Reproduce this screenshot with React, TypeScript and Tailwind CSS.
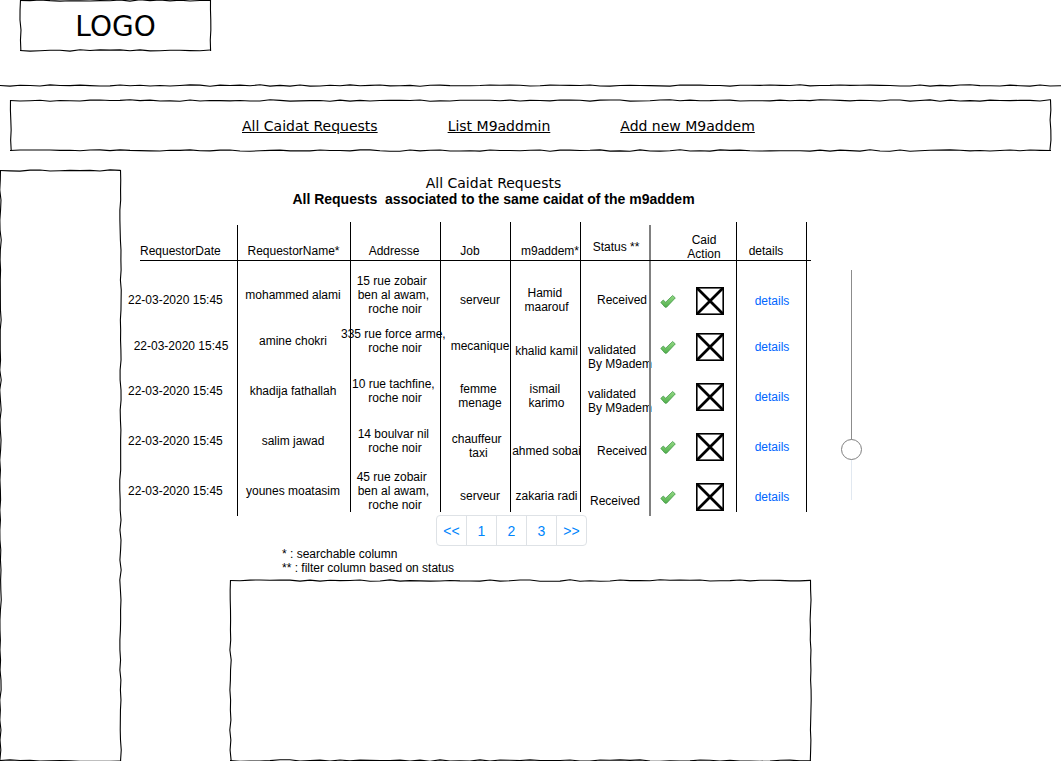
import { useState } from "react";
import type { ReactNode } from "react";

/* ---------- hand-drawn strokes ---------- */

function wobble(seed: number, horizontal: boolean, length: number) {
  let state = seed * 7919 + 17;
  const next = () => {
    state = (state * 1103515245 + 12345) % 2147483648;
    return state / 2147483648;
  };
  const parts: string[] = [];
  for (let at = 0; at <= length; at += 10) {
    const off = at === 0 ? 2.5 : 2.5 + (next() - 0.5) * 1.5;
    const v = off.toFixed(2);
    parts.push(`${at === 0 ? "M" : "L"}${horizontal ? `${at} ${v}` : `${v} ${at}`}`);
  }
  return parts.join(" ");
}

function Stroke({ seed, vertical = false, className }: { seed: number; vertical?: boolean; className: string }) {
  return (
    <svg aria-hidden="true" className={className}>
      <path d={wobble(seed, !vertical, 3000)} fill="none" stroke="#000" strokeWidth="1.1" />
    </svg>
  );
}

function SketchFrame({ seed }: { seed: number }) {
  return (
    <>
      <Stroke seed={seed} className="pointer-events-none absolute inset-x-0 -top-0.5 h-[5px] w-full" />
      <Stroke seed={seed + 1} className="pointer-events-none absolute inset-x-0 -bottom-0.5 h-[5px] w-full" />
      <Stroke seed={seed + 2} vertical className="pointer-events-none absolute inset-y-0 -left-0.5 h-full w-[5px]" />
      <Stroke seed={seed + 3} vertical className="pointer-events-none absolute inset-y-0 -right-0.5 h-full w-[5px]" />
    </>
  );
}

/* ---------- icons ---------- */

function CheckIcon() {
  return (
    <svg viewBox="0 0 16 16" className="size-4" aria-hidden="true">
      <defs>
        <linearGradient id="tick" x1="0" y1="0" x2="0" y2="1">
          <stop offset="0" stopColor="#93d984" />
          <stop offset="1" stopColor="#52b04c" />
        </linearGradient>
      </defs>
      <path
        d="M0.8 9.4 L3.2 7.1 L5.7 9.2 L12.6 2.5 L15.3 4.9 L6.6 14.2 L5 14.2 Z"
        fill="url(#tick)"
        stroke="#45994a"
        strokeWidth="0.8"
        strokeLinejoin="round"
      />
    </svg>
  );
}

function CrossBoxIcon() {
  return (
    <svg viewBox="0 0 28 28" className="size-7" aria-hidden="true">
      <path d="M1 1 L27 27 M27 1 L1 27" stroke="#000" strokeWidth="2.8" />
      <rect x="0.8" y="0.8" width="26.4" height="26.4" fill="none" stroke="#000" strokeWidth="1.6" />
    </svg>
  );
}

/* ---------- table ---------- */

const levels = {
  high: "",
  level: "pt-2.5",
  mark: "pt-3",
  low: "pt-5",
  lowest: "pt-8",
};

const sides = {
  start: "justify-start",
  center: "justify-center",
  end: "justify-end",
};

type Level = keyof typeof levels;
type Side = keyof typeof sides;

type CellProps = {
  children: ReactNode;
  level?: Level;
  side?: Side;
  inset?: string;
  rule?: string;
};

const thinRule = "after:w-px after:bg-black";
const thickRule = "after:w-0.5 after:bg-[#808080]";
const longRule = "group-last:after:-bottom-1";

function Cell({ children, level = "high", side = "center", inset = "", rule = thinRule }: CellProps) {
  return (
    <td
      className={`relative p-0 align-top group-first:pt-[13px] after:absolute after:inset-y-0 after:right-0 after:content-[''] ${rule}`}
    >
      <div className={`flex h-[42px] items-center text-center whitespace-pre ${levels[level]} ${sides[side]} ${inset}`}>
        {children}
      </div>
    </td>
  );
}

function Head({ children, inset, rule = thinRule }: { children: ReactNode; inset: string; rule?: string }) {
  return (
    <th
      scope="col"
      className={`relative align-bottom font-normal whitespace-pre after:absolute after:inset-y-0 after:right-0 after:content-[''] ${inset} ${rule}`}
    >
      {children}
    </th>
  );
}

type Request = {
  date: string;
  dateLevel: Level;
  dateSide: Side;
  name: string;
  address: string;
  job: string;
  agent: string;
  agentLevel: Level;
  status: string;
  statusLevel: Level;
  statusSide: Side;
  height: string;
};

const NB = "\u00a0";

const requests: Request[] = [
  {
    date: "22-03-2020 15:45", dateLevel: "level", dateSide: "start",
    name: "mohammed alami",
    address: `15 rue zobair${NB}${NB}\nben al awam,${NB}\nroche noir`,
    job: "serveur",
    agent: `Hamid${NB}\nmaarouf`, agentLevel: "level",
    status: "Received", statusLevel: "level", statusSide: "end",
    height: "h-[59px]",
  },
  {
    date: "22-03-2020 15:45", dateLevel: "level", dateSide: "center",
    name: "amine chokri",
    address: `335 rue force arme,${NB}\nroche noir`,
    job: "mecanique",
    agent: "khalid kamil", agentLevel: "low",
    status: "validated\nBy M9adem", statusLevel: "lowest", statusSide: "start",
    height: "h-[50px]",
  },
  {
    date: "22-03-2020 15:45", dateLevel: "high", dateSide: "start",
    name: "khadija fathallah",
    address: `10 rue tachfine,${NB}\nroche noir`,
    job: `femme${NB}\nmenage`,
    agent: `ismail${NB}\nkarimo`, agentLevel: "level",
    status: "validated\nBy M9adem", statusLevel: "low", statusSide: "start",
    height: "h-[50px]",
  },
  {
    date: "22-03-2020 15:45", dateLevel: "high", dateSide: "start",
    name: "salim jawad",
    address: `14 boulvar nil${NB}\nroche noir`,
    job: `chauffeur${NB}${NB}\ntaxi${NB}`,
    agent: "ahmed sobai", agentLevel: "low",
    status: "Received", statusLevel: "low", statusSide: "end",
    height: "h-[50px]",
  },
  {
    date: "22-03-2020 15:45", dateLevel: "high", dateSide: "start",
    name: "younes moatasim",
    address: `45 rue zobair${NB}${NB}\nben al awam,${NB}\nroche noir`,
    job: "serveur",
    agent: "zakaria radi", agentLevel: "level",
    status: "Received", statusLevel: "low", statusSide: "center",
    height: "h-[42px]",
  },
];

const statusInsets = { start: "pl-[7px]", center: "pr-0.5", end: "pr-1" };

function RequestsTable() {
  return (
    <table className="w-[679px] table-fixed border-separate border-spacing-0 text-xs leading-[14px]">
      <colgroup>
        <col className="w-[110px]" />
        <col className="w-[113px]" />
        <col className="w-[90px]" />
        <col className="w-[70px]" />
        <col className="w-[70px]" />
        <col className="w-[70px]" />
        <col className="w-[86px]" />
        <col className="w-[70px]" />
      </colgroup>
      <thead>
        <tr className="relative h-[39px] after:absolute after:-right-1 after:bottom-0 after:left-3 after:h-px after:bg-black after:content-['']">
          <Head inset="pb-[3px] pl-3 text-left" rule={`${thinRule} after:top-[3px]`}>RequestorDate</Head>
          <Head inset="pb-[3px] pr-0.5">RequestorName*</Head>
          <Head inset="pb-[3px] pr-1">Addresse</Head>
          <Head inset="pb-[3px] pr-3">Job</Head>
          <Head inset="pb-[3px] pl-2">m9addem*</Head>
          <Head inset="pb-[7px]" rule={`${thickRule} after:top-[3px]`}>Status **</Head>
          <Head inset="pl-5">{"Caid\nAction"}</Head>
          <Head inset="pb-[3px] pr-3">details</Head>
        </tr>
      </thead>
      <tbody>
        {requests.map((r, i) => (
          <tr key={i} className={`group ${r.height}`}>
            <Cell level={r.dateLevel} side={r.dateSide} inset="pr-1" rule={`${thinRule} ${longRule}`}>{r.date}</Cell>
            <Cell inset="pr-[3px]">{r.name}</Cell>
            <Cell inset="pr-0.5">{r.address}</Cell>
            <Cell level="level" inset="pl-2">{r.job}</Cell>
            <Cell level={r.agentLevel} inset="pl-px">{r.agent}</Cell>
            <Cell
              level={r.statusLevel}
              side={r.statusSide}
              inset={`text-left ${statusInsets[r.statusSide]}`}
              rule={`${thickRule} ${longRule}`}
            >
              <span className="text-left">{r.status}</span>
            </Cell>
            <Cell level="mark" side="start" inset="gap-5 pl-[9px]">
              <button type="button" aria-label={`Accept request of ${r.name}`}><CheckIcon /></button>
              <button type="button" aria-label={`Reject request of ${r.name}`}><CrossBoxIcon /></button>
            </Cell>
            <Cell level="mark">
              <a href="#details" className="text-[#0066ff]">details</a>
            </Cell>
          </tr>
        ))}
      </tbody>
    </table>
  );
}

/* ---------- controls ---------- */

function ScrollSlider() {
  const [value, setValue] = useState(180);
  return (
    <input
      type="range"
      aria-label="Scroll requests"
      min={0}
      max={230}
      value={value}
      onChange={(e) => setValue(Number(e.target.value))}
      className="mt-[37px] h-[251px] w-[21px] shrink-0 appearance-none bg-[length:1px_230px] bg-center bg-no-repeat [writing-mode:vertical-lr] [&::-webkit-slider-thumb]:size-[21px] [&::-webkit-slider-thumb]:appearance-none [&::-webkit-slider-thumb]:rounded-full [&::-webkit-slider-thumb]:border [&::-webkit-slider-thumb]:border-[#808080] [&::-webkit-slider-thumb]:bg-white"
      style={{ backgroundImage: `linear-gradient(#8c8c8c ${value}px, #e1e8f0 ${value}px)` }}
    />
  );
}

function Pagination() {
  return (
    <nav aria-label="Pages" className="mt-[3px] ml-[308px] flex">
      {["<<", "1", "2", "3", ">>"].map((label) => (
        <button
          key={label}
          type="button"
          className="-ml-px h-[31px] w-[31px] border border-[#dee2e6] bg-white text-sm text-[#0085fc] first:ml-0 first:rounded-l last:rounded-r"
        >
          {label}
        </button>
      ))}
    </nav>
  );
}

const links = ["All Caidat Requests", "List M9addmin", "Add new M9addem"];

export default function App() {
  return (
    <div className="flex min-h-screen flex-col overflow-hidden bg-white font-['Liberation_Sans',Arial,sans-serif] text-black">
      <header>
        <div className="relative ml-5 flex h-[51px] w-[191px] items-center justify-center pt-0.5 font-['DejaVu_Sans',Verdana,sans-serif] text-[28px]">
          <SketchFrame seed={3} />
          LOGO
        </div>
        <Stroke seed={11} className="mt-8 block h-[5px] w-full" />
        <nav
          aria-label="Main"
          className="relative mx-2.5 mt-3 flex h-[51px] items-center gap-[70px] pl-[232px] font-['DejaVu_Sans',Verdana,sans-serif] text-sm"
        >
          <SketchFrame seed={21} />
          {links.map((label) => (
            <a key={label} href="#nav" className="whitespace-nowrap underline">
              {label}
            </a>
          ))}
        </nav>
      </header>

      <div className="mt-[19px] flex flex-1 gap-[7px]">
        <aside className="relative w-[121px] shrink-0">
          <SketchFrame seed={31} />
        </aside>

        <main className="flex flex-1 flex-col items-start pt-[5px]">
          <div className="w-[731px] text-center text-sm leading-4">
            <h1 className="font-['DejaVu_Sans',Verdana,sans-serif]">All Caidat Requests</h1>
            <h2 className="font-bold whitespace-pre">All Requests  associated to the same caidat of the m9addem</h2>
          </div>

          <div className="mt-[15px] flex gap-[34px]">
            <RequestsTable />
            <ScrollSlider />
          </div>

          <Pagination />

          <div className="mt-px ml-[154px] text-xs leading-[14px]">
            <p>* : searchable column</p>
            <p>** : filter column based on status</p>
          </div>

          <section aria-label="Request details" className="relative mt-[5px] ml-[102px] min-h-[181px] w-[581px] flex-1">
            <SketchFrame seed={41} />
          </section>
        </main>
      </div>
    </div>
  );
}
